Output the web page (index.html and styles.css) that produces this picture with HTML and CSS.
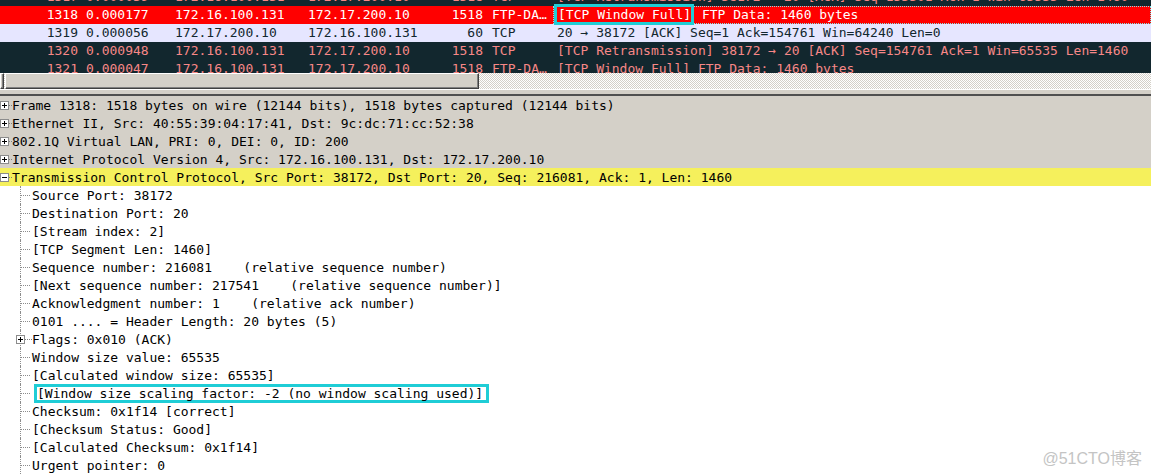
FILE: index.html
```html
<!DOCTYPE html>
<html lang="en">
<head>
    <meta charset="UTF-8">
    <title>Wireshark - TCP Window Full</title>
    <link rel="stylesheet" href="styles.css">
</head>
<body>
    <div class="app">
        <!-- lista de pacotes (rolada) -->
        <div class="packetList">
            <div class="pkt bad first">
                <span class="cNo">1317</span><span class="cTime">0.000039</span><span class="cSrc">172.16.100.131</span><span class="cDst">172.17.200.10</span><span class="cLen">1518</span><span class="cProto">TCP</span><span class="cInfo">[TCP Retransmission] 38172 → 20 [ACK] Seq=153301 Ack=1 Win=65535 Len=1460</span>
            </div>
            <div class="pkt selected">
                <span class="cNo">1318</span><span class="cTime">0.000177</span><span class="cSrc">172.16.100.131</span><span class="cDst">172.17.200.10</span><span class="cLen">1518</span><span class="cProto">FTP-DA…</span><span class="cInfo focus"><span class="mark">[TCP Window Full]</span> FTP Data: 1460 bytes</span>
            </div>
            <div class="pkt tcp">
                <span class="cNo">1319</span><span class="cTime">0.000056</span><span class="cSrc">172.17.200.10</span><span class="cDst">172.16.100.131</span><span class="cLen">60</span><span class="cProto">TCP</span><span class="cInfo">20 → 38172 [ACK] Seq=1 Ack=154761 Win=64240 Len=0</span>
            </div>
            <div class="pkt bad">
                <span class="cNo">1320</span><span class="cTime">0.000948</span><span class="cSrc">172.16.100.131</span><span class="cDst">172.17.200.10</span><span class="cLen">1518</span><span class="cProto">TCP</span><span class="cInfo">[TCP Retransmission] 38172 → 20 [ACK] Seq=154761 Ack=1 Win=65535 Len=1460</span>
            </div>
            <div class="pkt bad">
                <span class="cNo">1321</span><span class="cTime">0.000047</span><span class="cSrc">172.16.100.131</span><span class="cDst">172.17.200.10</span><span class="cLen">1518</span><span class="cProto">FTP-DA…</span><span class="cInfo">[TCP Window Full] FTP Data: 1460 bytes</span>
            </div>
        </div>

        <div class="hScroll">
            <span class="hBtn"></span>
            <span class="hThumb"></span>
        </div>
        <div class="splitter"></div>

        <!-- detalhes do pacote -->
        <div class="tree">
            <div class="node top"><span class="exp plus"></span><span class="conn"></span>Frame 1318: 1518 bytes on wire (12144 bits), 1518 bytes captured (12144 bits)</div>
            <div class="node top"><span class="exp plus"></span><span class="conn"></span>Ethernet II, Src: 40:55:39:04:17:41, Dst: 9c:dc:71:cc:52:38</div>
            <div class="node top"><span class="exp plus"></span><span class="conn"></span>802.1Q Virtual LAN, PRI: 0, DEI: 0, ID: 200</div>
            <div class="node top"><span class="exp plus"></span><span class="conn"></span>Internet Protocol Version 4, Src: 172.16.100.131, Dst: 172.17.200.10</div>
            <div class="node top hl"><span class="exp"></span><span class="conn"></span>Transmission Control Protocol, Src Port: 38172, Dst Port: 20, Seq: 216081, Ack: 1, Len: 1460</div>

            <div class="node child">Source Port: 38172</div>
            <div class="node child">Destination Port: 20</div>
            <div class="node child">[Stream index: 2]</div>
            <div class="node child">[TCP Segment Len: 1460]</div>
            <div class="node child">Sequence number: 216081    (relative sequence number)</div>
            <div class="node child">[Next sequence number: 217541    (relative sequence number)]</div>
            <div class="node child">Acknowledgment number: 1    (relative ack number)</div>
            <div class="node child">0101 .... = Header Length: 20 bytes (5)</div>
            <div class="node child sub"><span class="exp plus"></span><span class="conn short"></span>Flags: 0x010 (ACK)</div>
            <div class="node child">Window size value: 65535</div>
            <div class="node child">[Calculated window size: 65535]</div>
            <div class="node child"><span class="mark2">[Window size scaling factor: -2 (no window scaling used)]</span></div>
            <div class="node child">Checksum: 0x1f14 [correct]</div>
            <div class="node child">[Checksum Status: Good]</div>
            <div class="node child">[Calculated Checksum: 0x1f14]</div>
            <div class="node child">Urgent pointer: 0</div>
        </div>

        <div class="watermark">@51CTO博客</div>
    </div>
</body>
</html>
```

FILE: styles.css
```css
* {
    box-sizing: border-box;
    margin: 0;
    padding: 0;
}

body {
    width: 1151px;
    height: 474px;
    overflow: hidden;
    background-color: #ffffff;
    font-family: "DejaVu Sans Mono", "Liberation Mono", monospace;
    font-size: 13px;
}

.app {
    position: relative;
    height: 474px;
    overflow: hidden;
}

/* lista de pacotes */
.packetList {
    height: 73px;
    overflow: hidden;
    background-color: #12272e;
}

.pkt {
    display: flex;
    height: 18px;
    line-height: 18px;
    white-space: pre;
}

.pkt.first {
    margin-top: -12px;
}

.pkt.bad {
    background-color: #12272e;
    color: #f78787;
}

.pkt.tcp {
    background-color: #e6e6ff;
    color: #12272e;
}

.pkt.selected {
    background-color: #ff0000;
    color: #ffffff;
}

.cNo, .cTime, .cSrc, .cDst, .cLen, .cProto {
    flex: none;
    overflow: hidden;
}

.cNo {
    width: 82px;
    text-align: right;
    padding-right: 4px;
}

.cTime {
    width: 93px;
    padding-left: 4px;
}

.cSrc { width: 133px; }
.cDst { width: 135px; }

.cLen {
    width: 44px;
    text-align: right;
    padding-right: 4px;
}

.cProto {
    width: 66px;
    padding-left: 5px;
}

.cInfo {
    flex: 1;
    padding-left: 4px;
}

.cInfo.focus {
    border: 1px dotted #7fe6ee;
    line-height: 16px;
    padding-left: 3px;
}

.mark {
    margin-left: -3px;
    padding: 0 0 0 1px;
    border: 3px solid #1fcdd6;
}

/* barra de rolagem horizontal */
.hScroll {
    display: flex;
    height: 16px;
    background: repeating-conic-gradient(#d4d0c8 0 25%, #ffffff 0 50%) 0 0 / 2px 2px;
}

.hBtn, .hThumb {
    display: block;
    height: 16px;
    background-color: #d4d0c8;
    border-top: 1px solid #ffffff;
    border-left: 1px solid #ffffff;
    border-right: 1px solid #404040;
    border-bottom: 1px solid #404040;
    box-shadow: inset -1px -1px 0 #808080;
}

.hBtn {
    width: 4px;
    margin-right: 1px;
}

.hThumb {
    width: 474px;
}

.splitter {
    height: 7px;
    background-color: #d4d0c8;
    border-top: 1px solid #ffffff;
    border-bottom: 2px solid #505050;
}

/* arvore de detalhes */
.tree {
    color: #000000;
}

.node {
    position: relative;
    display: flex;
    align-items: center;
    height: 18px;
    white-space: pre;
}

.node.top {
    background-color: #d4d0c8;
}

.node.top.hl {
    background-color: #f5f05c;
}

.exp {
    position: relative;
    display: block;
    flex: none;
    width: 9px;
    height: 9px;
    border: 1px solid #8c8c8c;
    background-color: #ffffff;
}

.exp::before {
    content: "";
    position: absolute;
    left: 1px;
    top: 3px;
    width: 5px;
    border-top: 1px solid #000000;
}

.exp.plus::after {
    content: "";
    position: absolute;
    left: 3px;
    top: 1px;
    height: 5px;
    border-left: 1px solid #000000;
}

.conn {
    display: block;
    flex: none;
    width: 3px;
    border-top: 1px dotted #808080;
}

.node.child {
    padding-left: 32px;
}

.node.child::before {
    content: "";
    position: absolute;
    left: 20px;
    top: 0;
    bottom: 0;
    border-left: 1px dotted #8c8c8c;
}

.node.child::after {
    content: "";
    position: absolute;
    left: 21px;
    top: 9px;
    width: 9px;
    border-top: 1px dotted #8c8c8c;
}

.node.sub {
    padding-left: 16px;
}

.node.sub::after {
    display: none;
}

.node.sub .exp {
    z-index: 1;
}

.conn.short {
    width: 7px;
}

.mark2 {
    margin-left: 2px;
    padding: 0 3px 0 0;
    border: 3px solid #1fcdd6;
    line-height: 13px;
}

.watermark {
    position: absolute;
    right: 9px;
    top: 445px;
    font-family: "Liberation Sans", "Noto Sans CJK SC", sans-serif;
    font-size: 16px;
    color: #c4c4c4;
}
```
